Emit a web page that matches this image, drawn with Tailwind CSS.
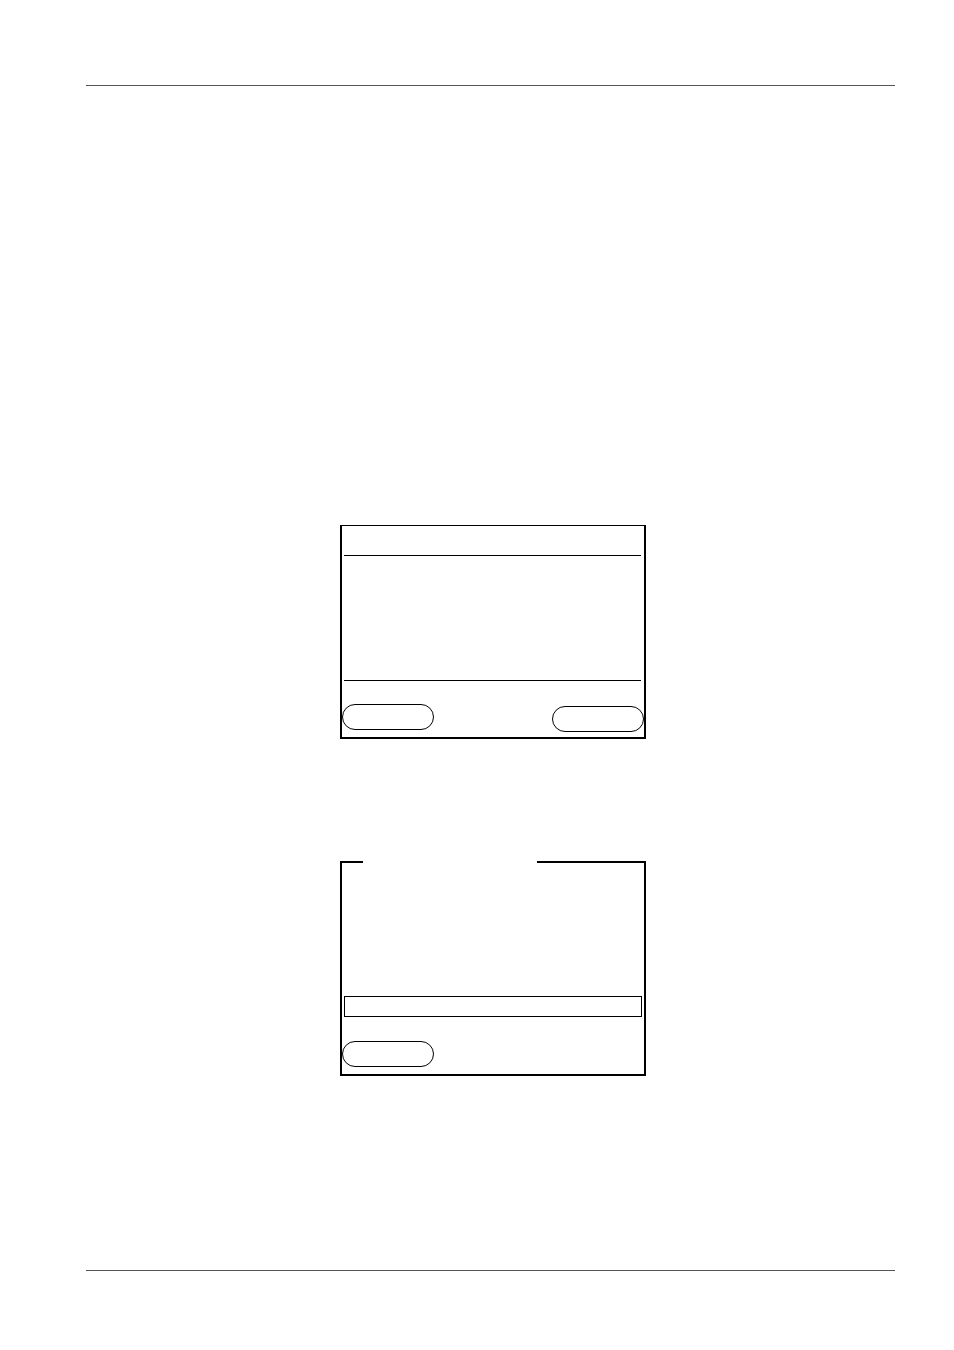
<!DOCTYPE html>
<html lang="en">
<head>
<meta charset="utf-8">
<meta name="viewport" content="width=device-width, initial-scale=1">
<title>Display screens</title>
<script src="https://cdn.jsdelivr.net/npm/@tailwindcss/browser@4"></script>
</head>
<body class="bg-white text-black font-['Liberation_Sans',sans-serif]">
<main class="flex min-h-screen flex-col pt-[85px] pr-[59px] pb-[79px] pl-[86px]">
  <hr class="border-t border-[#555555]">
  <div class="flex flex-col items-center gap-[122px] pt-[439px] pb-[194px] pl-[5px]">
    <!-- Message display with two soft keys -->
    <section class="w-full max-w-[306px] border-2 border-t border-black pt-[29px] pb-[5px]" aria-label="Message display">
      <div class="mr-[3px] ml-[2px] h-[126px] border-y border-black"></div>
      <div class="flex items-start justify-between pt-[23px]">
        <button type="button" aria-label="Left soft key" class="h-[26px] w-[92px] rounded-full border border-black"></button>
        <button type="button" aria-label="Right soft key" class="mt-[2px] h-[26px] w-[92px] rounded-full border border-black"></button>
      </div>
    </section>
    <!-- Entry display with a gap for the title in the top border -->
    <fieldset class="w-full max-w-[306px] border-2 border-black pb-[7px]" aria-label="Entry display">
      <legend class="ml-[21px] h-[2px] w-[174px]"></legend>
      <input type="text" aria-label="Entry" class="mt-[133px] mr-[2px] ml-[2px] block h-[21px] w-[calc(100%-4px)] border border-black px-1 text-sm">
      <button type="button" aria-label="Left soft key" class="mt-[24px] block h-[26px] w-[92px] rounded-full border border-black"></button>
    </fieldset>
  </div>
  <hr class="border-t border-[#555555]">
</main>
</body>
</html>
